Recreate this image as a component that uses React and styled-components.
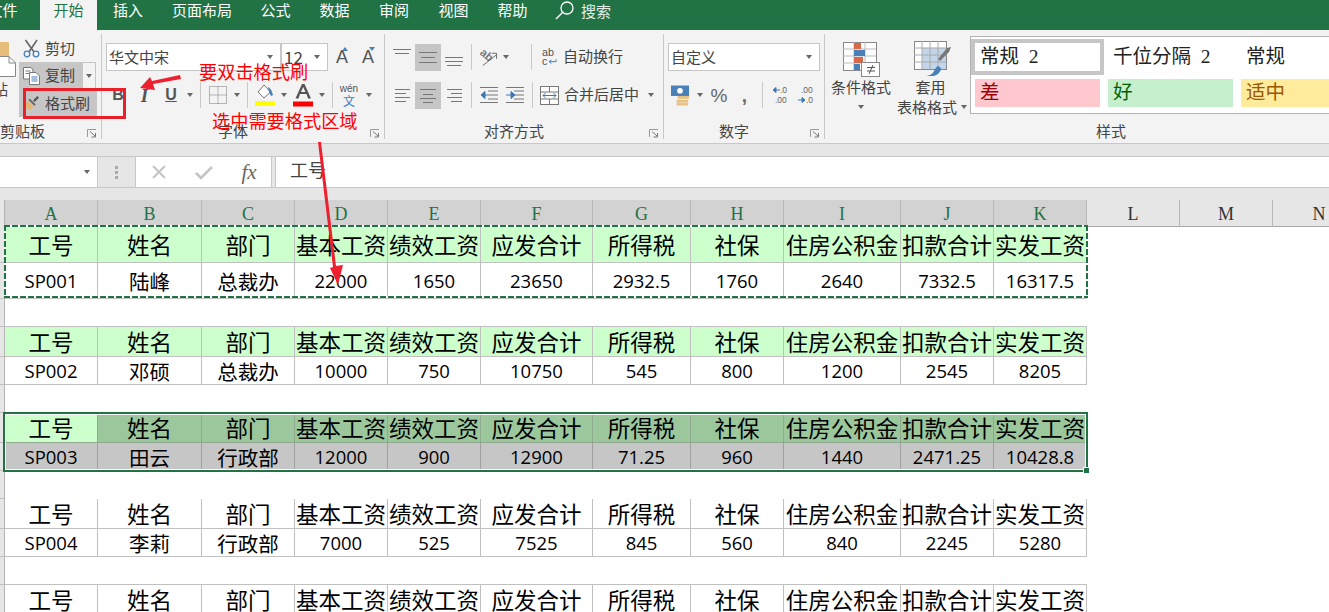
import React from "react";
import styled, { createGlobalStyle } from "styled-components";

const UI = `"Noto Sans CJK SC", "Noto Sans", sans-serif`;
const SERIF = `"Liberation Serif", "Noto Sans CJK SC", serif`;
const GREEN = "#217346";

const Global = createGlobalStyle`
  html, body { margin: 0; padding: 0; background: #fff; overflow: hidden; }
  #root { width: 1329px; height: 612px; }
`;

const Page = styled.div`
  position: relative; width: 1329px; height: 612px; overflow: hidden;
  font-family: ${UI}; color: #444; background: #fff;
`;

/* ---------- tabs ---------- */
const TabBar = styled.div`
  display: flex; height: 30px; background: ${GREEN}; margin-left: -34px; width: 1363px;
`;
const Tab = styled.div`
  flex: none; width: ${p => p.$w || 59}px; display: flex; align-items: center; justify-content: center;
  box-sizing: border-box; padding-bottom: 10px;
  font-size: 15px; line-height: 20px; color: ${p => (p.$active ? GREEN : "#fff")};
  background: ${p => (p.$active ? "#f3f3f3" : "transparent")};
  margin: ${p => (p.$active ? "0 1px" : "0")};
`;
const SearchBox = styled.div`
  display: flex; align-items: flex-start; gap: 7px; margin-left: 13px; color: #e4efe8; font-size: 15px; line-height: 20px;
  padding-top: 1px;
`;

/* ---------- ribbon ---------- */
const Ribbon = styled.div`
  display: flex; height: 109px; background: #f3f3f3; border-bottom: 1px solid #c8c8c8;
  padding-top: 4px; box-sizing: content-box; overflow: hidden;
`;
const Group = styled.div`
  flex: none; width: ${p => p.$w}px; height: 105px; box-sizing: border-box; display: flex; flex-direction: column;
  margin-left: ${p => p.$ml || 0}px; border-right: 1px solid #c8c8c8;
  ${p => p.$noBorder && "border-right: none;"}
`;
const Body = styled.div`
  flex: 1; display: flex; flex-direction: column; gap: 10px; padding-top: 9px;
`;
const Row = styled.div`
  display: flex; align-items: center; height: 28px; flex: none;
`;
const GroupFoot = styled.div`
  flex: none; height: 16px; display: grid; grid-template-columns: 1fr auto 1fr 20px;
  align-items: center; font-size: 15px; line-height: 16px; color: #444;
`;
const FootText = styled.span`grid-column: 2;`;
const Launcher = styled.svg`
  grid-column: 4; justify-self: end; margin-right: 4px; width: 10px; height: 9px; margin-top: 5px;
`;
const Slot = styled.div`
  flex: none; width: ${p => p.$w}px; margin-left: ${p => p.$ml || 0}px;
  display: flex; align-items: center; justify-content: center; height: ${p => p.$h || 28}px;
  ${p => p.$active && "background:#c6c6c6; height:27px;"}
  position: relative;
`;
const Caret = styled.div`
  flex: none; margin-left: ${p => p.$ml || 0}px; width: 0; height: 0;
  border-left: 3.5px solid transparent; border-right: 3.5px solid transparent;
  border-top: 4px solid #666;
`;
const VLine = styled.div`
  flex: none; width: 1px; height: 26px; margin-left: ${p => p.$ml || 0}px; background: #c8c8c8;
`;
const ComboBox = styled.div`
  flex: none; box-sizing: border-box; width: ${p => p.$w}px; height: 28px; margin-left: ${p => p.$ml || 0}px;
  background: #fff; border: 1px solid #c6c6c6; display: flex; align-items: center; justify-content: space-between;
  padding: 0 7px 0 2px; font-size: ${p => p.$fs || 15}px; color: #444;
  span { margin-top: -2px; }
`;
const FaceLetter = styled.span`
  font-family: "Liberation Sans", sans-serif; font-size: ${p => p.$size || 16}px; font-weight: ${p => p.$weight || 700};
  font-style: ${p => (p.$italic ? "italic" : "normal")}; color: #555; line-height: 1;
  text-decoration: ${p => (p.$under ? "underline" : "none")};
  ${p => p.$serif && `font-family:"Liberation Serif",serif;`}
`;
const SizeArrow = styled.span`
  position: absolute; top: 4px; right: 0; width: 0; height: 0;
  border-left: 3px solid transparent; border-right: 3px solid transparent;
  ${p => (p.$up ? "border-bottom: 4px solid #4a80b8;" : "border-top: 4px solid #4a80b8;")}
`;
const Wen = styled.div`
  display: flex; flex-direction: column; align-items: center; line-height: 1;
  font-family: "Liberation Sans", sans-serif; font-size: 10px; color: #555;
  span:last-child { font-family: ${UI}; font-size: 12px; color: #3f79b5; line-height: 13px; }
`;
const CmdText = styled.span`
  flex: none; margin-left: ${p => p.$ml || 0}px; margin-top: -2px; font-size: 15px; line-height: 20px; color: #444; white-space: nowrap;
`;
const NumGlyph = styled.span`
  font-family: "Liberation Sans", sans-serif; font-size: ${p => p.$size}px; color: #666; line-height: 1;
  ${p => p.$bold && "font-weight:700;"}
`;

/* clipboard */
const ClipBody = styled.div`
  flex: 1; display: flex; padding-left: 6px;
`;
const PasteCol = styled.div`
  flex: none; width: 46px; display: flex; flex-direction: column; align-items: flex-end; padding-top: 7px;
`;
const PasteText = styled.span`
  width: 46px; text-align: center; font-size: 15px; line-height: 20px; margin-top: 2px;
`;
const ClipCol = styled.div`
  margin-left: 3px; display: flex; flex-direction: column; width: 78px; padding-top: 1px;
`;
const ClipRow = styled.div`
  display: flex; align-items: center; height: ${p => p.$h || 27}px; width: ${p => p.$w || 78}px;
  padding-left: 4px; box-sizing: border-box; gap: 5px; font-size: 15px; color: #444;
  ${p => p.$on && "background:#c6c6c6;"}
  span { margin-top: -2px; }
`;
const SplitRow = styled.div`display: flex;`;
const SplitArrow = styled.div`
  flex: none; box-sizing: border-box; width: 13px; height: 27px; border: 1px solid #c6c6c6; border-left: none;
  display: flex; align-items: center; justify-content: center;
`;

/* styles group */
const StylesBody = styled.div`display: flex; flex: 1; align-items: flex-start;`;
const BigBtn = styled.div`
  flex: none; width: ${p => p.$w}px; margin-left: ${p => p.$ml || 0}px; display: flex; flex-direction: column; align-items: center;
  font-size: 15px; line-height: 20px; color: #444; padding-top: ${p => p.$top || 8}px;
`;
const BtnLine = styled.div`display: flex; align-items: center; gap: 4px; height: 20px;`;
const Gallery = styled.div`
  flex: none; width: 420px; height: 78px; box-sizing: border-box; margin: 2px 0 0 2px; background: #fff;
  border: 1px solid #b2b2b2; padding: 6px 0 0 4px; display: grid;
  grid-template-columns: repeat(3, 125px); grid-auto-rows: 28px; gap: 8px;
`;
const StyleCell = styled.div`
  font-family: ${SERIF}; font-size: 19.5px; padding: 0 0 5px 5px; box-sizing: border-box; display: flex; align-items: center; white-space: pre;
  background: ${p => p.$bg || "#fff"}; color: ${p => p.$fg || "#222"};
  ${p => p.$sel && "outline: 4px solid #c6c6c6;"}
`;

/* ---------- formula bar ---------- */
const FormulaBand = styled.div`
  background: #e6e6e6; padding: 12px 0; 
`;
const FormulaBar = styled.div`
  display: flex; height: 32px; box-sizing: border-box; background: #fff;
  border-top: 1px solid #c8c8c8; border-bottom: 1px solid #c8c8c8;
`;
const NameBox = styled.div`
  flex: none; width: 98px; box-sizing: border-box; background: #fff; border-right: 1px solid #c8c8c8;
  display: flex; align-items: center; justify-content: flex-end; padding-right: 7px;
`;
const Gutter = styled.div`
  flex: none; width: 37px; background: #e6e6e6; display: flex; align-items: center; justify-content: center; padding-right: 1px; box-sizing: border-box;
`;
const DragDots = styled.div`
  width: 3px; height: 13px;
  background: repeating-linear-gradient(to bottom, #aaa 0 3px, transparent 3px 5px);
`;
const FxBtns = styled.div`
  flex: none; width: 137px; box-sizing: border-box; border: solid #c8c8c8; border-width: 0 1px;
  display: flex; align-items: center; padding-left: 13px;
`;
const FxSlot = styled.div`
  width: 20px; margin-right: ${p => p.$mr || 0}px; display: flex; justify-content: center;
`;
const Fx = styled.span`
  font-family: "Liberation Serif", serif; font-style: italic; font-weight: 400; font-size: 21px; color: #666; line-height: 1;
`;
const Spacer = styled.div`flex: none; width: 3px; background: #e6e6e6;`;
const FormulaInput = styled.div`
  flex: 1; border-left: 1px solid #c8c8c8; padding-left: 14px; font-family: ${SERIF}; font-size: 18px; line-height: 29px; color: #444;
`;

/* ---------- sheet ---------- */
const COLS = "5px 93px 104px 93px 93px 93px 112px 98px 93px 117px 93px 93px 93px 93px 93px";
const Sheet = styled.div`display: flex; flex-direction: column;`;
const HeadRow = styled.div`
  display: grid; grid-template-columns: ${COLS}; height: 27px; background: #e6e6e6;
`;
const Corner = styled.div`border-right: 1px solid #b4b4b4; background: #e6e6e6;`;
const ColHead = styled.div`
  display: flex; align-items: center; justify-content: center; box-sizing: border-box; padding-top: 2px;
  font-family: "Liberation Serif", serif; font-size: 18px; line-height: 1;
  background: ${p => (p.$sel ? "#d2d2d2" : "#e6e6e6")}; color: ${p => (p.$sel ? GREEN : "#333")};
  border-right: 1px solid #b8b8b8; border-bottom: 1px solid ${p => (p.$sel ? GREEN : "#a8a8a8")};
`;
const GridRow = styled.div`
  display: grid; grid-template-columns: ${COLS}; height: ${p => p.$h}px; background: #fff;
`;
const Stub = styled.div`
  background: #e6e6e6; border-right: 1px solid #b4b4b4; border-bottom: 1px solid #c0c0c0;
`;
const Cell = styled.div`
  display: flex; align-items: center; justify-content: center; box-sizing: border-box; white-space: nowrap; overflow: visible;
  color: #000; background: ${p => p.$bg || "#fff"};
  padding-top: ${p => (p.$head ? 0 : 2)}px;
  border-right: 1px solid ${p => p.$line || "#c0c0c0"}; border-bottom: 1px solid ${p => p.$line || "#c0c0c0"};
  font-family: ${p => (p.$num ? `"Open Sans", sans-serif` : UI)};
  font-size: ${p => (p.$head ? 22.5 : p.$num ? 18.5 : 20.5)}px; line-height: 1;
`;
const BlankCell = styled.div`border-bottom: ${p => (p.$line ? "1px solid #c0c0c0" : "none")};`;
const Block = styled.div`position: relative;`;
const Ants = styled.div`
  position: absolute; left: 4px; top: -2px; width: 1084px; height: 73px; pointer-events: none;
  background-image:
    repeating-linear-gradient(to right, ${GREEN} 0 6px, #fff 6px 8px),
    repeating-linear-gradient(to right, ${GREEN} 0 6px, #fff 6px 8px),
    repeating-linear-gradient(to bottom, ${GREEN} 0 6px, #fff 6px 8px),
    repeating-linear-gradient(to bottom, ${GREEN} 0 6px, #fff 6px 8px);
  background-size: 100% 2px, 100% 2px, 2px 100%, 2px 100%;
  background-position: 0 0, 0 100%, 0 0, 100% 0;
  background-repeat: no-repeat;
`;
const Selection = styled.div`
  position: absolute; left: 3px; top: -1px; width: 1085px; height: 60px; box-sizing: border-box;
  border: 2px solid ${GREEN}; box-shadow: inset 0 0 0 1px #fff;
`;
const Handle = styled.div`
  position: absolute; left: 1083px; top: 54px; width: 5px; height: 5px; background: ${GREEN}; border: 1px solid #fff;
`;

/* ---------- annotations ---------- */
const Overlay = styled.svg`position: absolute; left: 0; top: 0; pointer-events: none;`;
const Note = styled.div`
  position: absolute; left: ${p => p.$x}px; top: ${p => p.$y}px; color: #f00; font-size: 18.2px; line-height: 22px; white-space: nowrap;
`;
const RedBox = styled.div`
  position: absolute; left: 23px; top: 88px; width: 103px; height: 31px; box-sizing: border-box; border: 3px solid #e8202a;
`;

/* ---------- icons ---------- */
const Lines = ({ w = 18, h = 24, rows, color = "#777" }) => (
  <svg width={w} height={h} viewBox={`0 0 ${w} ${h}`}>
    {rows.map(([x, y, l], i) => <rect key={i} x={x} y={y} width={l} height="1" fill={color} />)}
  </svg>
);
const LaunchIcon = () => (
  <Launcher viewBox="0 0 10 9">
    <path d="M0.5 8V0.5H9" fill="none" stroke="#999" />
    <path d="M3 2.5L8 7M8.5 4V8H4.5" fill="none" stroke="#777" />
  </Launcher>
);
const Foot = ({ children }) => (
  <GroupFoot>
    <FootText>{children}</FootText>
    <LaunchIcon />
  </GroupFoot>
);
const Scissors = () => (
  <svg width="17" height="19" viewBox="0 0 17 19">
    <path d="M2.5 1L11 13M14 1L6 13" stroke="#666" strokeWidth="1.6" fill="none" />
    <circle cx="4" cy="15" r="2.8" stroke="#4a80b8" strokeWidth="1.3" fill="none" />
    <circle cx="13" cy="15" r="2.8" stroke="#4a80b8" strokeWidth="1.3" fill="none" />
  </svg>
);
const CopyIcon = () => (
  <svg width="17" height="18" viewBox="0 0 17 18">
    <path d="M.5.5H8L10 3V12H.5Z" fill="#fff" stroke="#777" />
    <path d="M2.5 4h5M2.5 6.5h5" stroke="#777" />
    <path d="M6.5 5.5H13L16.5 9V17.5H6.5Z" fill="#fff" stroke="#777" />
    <path d="M8.5 10h6M8.5 12h6M8.5 14h6" stroke="#4a80b8" />
  </svg>
);
const BrushIcon = () => (
  <svg width="17" height="17" viewBox="0 0 16 16">
    <path d="M9.5 5L13.5 1 15 2.5 11 6.500Z" fill="#555" />
    <path d="M6.500 3.500L12 9 10.500 10 5 4.500Z" fill="#666" />
    <path d="M5 5.500L10 10.500 6 15 1 9.500Z" fill="#e5b777" />
  </svg>
);
const PasteIcon = () => (
  <svg width="30" height="36" viewBox="0 0 30 36">
    <rect x="0" y="1" width="23" height="15" rx="1" fill="#e7bd7b" />
    <path d="M3.5 15.5H23L29.5 22V35.5H3.5Z" fill="#fff" stroke="#888" />
    <path d="M23 15.5V22H29.5" fill="none" stroke="#888" />
  </svg>
);
const BorderIcon = () => (
  <svg width="18" height="18" viewBox="0 0 18 18">
    <rect x=".5" y=".5" width="17" height="17" fill="none" stroke="#777" strokeDasharray="1 1" />
    <path d="M9 .5V17.500M.5 9H17.500" stroke="#777" strokeDasharray="1 1" />
  </svg>
);
const FillIcon = () => (
  <svg width="20" height="22" viewBox="0 0 20 22">
    <path d="M9 1L3 8l6 6 6.5-6Z" fill="#fff" stroke="#777" />
    <path d="M13 3c2 1 3 2.500 4 5l1 3-2 1-2-4" fill="#4a80b8" />
    <rect x="0" y="17" width="20" height="5" fill="#ff0" />
  </svg>
);
const ColorIcon = () => (
  <svg width="20" height="23" viewBox="0 0 20 23">
    <path d="M9 0h2.500L18 14.500h-3L13.500 10H7l-1.500 4.500H2.500ZM8 8h4.500L10.200 3Z" fill="#555" fillRule="evenodd" />
    <rect x="0" y="17.500" width="20" height="5" fill="#f00" />
  </svg>
);
const OrientIcon = () => (
  <svg width="19" height="19" viewBox="0 0 19 19">
    <g transform="rotate(40 7 7)"><text x="0" y="11" fontFamily="Liberation Sans" fontSize="12" fontWeight="700" fill="#777">ab</text></g>
    <path d="M3 18L17 7M12.500 5h5V11" fill="none" stroke="#666" />
  </svg>
);
const Indent = ({ flip }) => (
  <svg width="18" height="16" viewBox="0 0 18 16">
    <path d="M0 .5h18M8 4h10M8 8h10M8 12h10M0 15.500h18" stroke="#777" />
    <path d={flip ? "M0 8H5M5 4.500L9 8 5 11.500Z" : "M3 8H8M5 4.500L1 8 5 11.500Z"} fill="#3f79b5" stroke="#3f79b5" />
  </svg>
);
const WrapIcon = () => (
  <svg width="16" height="18" viewBox="0 0 16 18">
    <text x="0" y="8" fontFamily="Liberation Sans" fontSize="11.500" fill="#555">ab</text>
    <text x="0" y="17.500" fontFamily="Liberation Sans" fontSize="11.500" fill="#555">c</text>
    <path d="M15 11.500V14H8M10 12l-2.500 2 2.500 2" fill="none" stroke="#3f79b5" />
  </svg>
);
const MergeIcon = () => (
  <svg width="19" height="19" viewBox="0 0 19 19">
    <rect x=".5" y=".5" width="18" height="18" fill="#fff" stroke="#777" />
    <path d="M0 6h19M0 13h19M9.500 0v6M9.500 13v6" stroke="#777" />
    <path d="M3 9.500h13M5.500 7L3 9.500 5.500 12M13.500 7L16 9.500 13.500 12" fill="none" stroke="#3f79b5" />
  </svg>
);
const Currency = () => (
  <svg width="20" height="21" viewBox="0 0 20 21">
    <rect x="0" y="0" width="19" height="11" fill="#4a80b8" />
    <circle cx="9.500" cy="5.500" r="3" fill="#fff" />
    <rect x="7" y="11" width="12" height="3" fill="#e8c07f" />
    <rect x="6" y="15" width="12" height="3" fill="#e8c07f" />
    <rect x="6" y="18.500" width="12" height="2.500" fill="#e8c07f" />
  </svg>
);
const Decimal = ({ more }) => (
  <svg width="16" height="18" viewBox="0 0 16 18">
    <text x={more ? 3 : 8} y="7" fontFamily="Liberation Sans" fontSize="8.500" fill="#666">{more ? ".00" : ".0"}</text>
    <text x={more ? 8 : 3} y="17" fontFamily="Liberation Sans" fontSize="8.500" fill="#666">{more ? ".0" : ".00"}</text>
    {more
      ? <path d="M0 14h6M4 11.500L7 14l-3 2.500Z" fill="#3f79b5" stroke="#3f79b5" />
      : <path d="M2 4h6M4 1.500L1 4l3 2.500Z" fill="#3f79b5" stroke="#3f79b5" />}
  </svg>
);
const CondIcon = () => (
  <svg width="37" height="35" viewBox="0 0 37 35">
    <rect x=".5" y=".5" width="33" height="28" fill="#fff" stroke="#888" />
    <path d="M11 0v28M22 0v28M0 7h33M0 14h33M0 21h33" stroke="#bbb" />
    <rect x="11" y="1" width="7" height="6" fill="#d9684a" />
    <rect x="11" y="8" width="11" height="6" fill="#4a80b8" />
    <rect x="11" y="15" width="9" height="6" fill="#d9684a" />
    <rect x="11" y="22" width="6" height="6" fill="#4a80b8" />
    <rect x="18.500" y="20.500" width="18" height="14" fill="#fff" stroke="#888" />
    <path d="M24 25.500h8M24 29h8M30 23l-4 9" stroke="#555" fill="none" />
  </svg>
);
const TableIcon = () => (
  <svg width="37" height="36" viewBox="0 0 37 36">
    <rect x=".5" y=".5" width="32" height="28" fill="#fff" stroke="#888" />
    <rect x="8" y="7" width="24" height="21" fill="#c3d5e9" />
    <path d="M8 0v28M16 0v28M24 0v28M0 7h32M0 14h32M0 21h32" stroke="#aaa" />
    <path d="M24 18l9-11 4-1-2 5-9 9Z" fill="#777" />
    <path d="M10 35c5 0 9-2 10-5 1-2 3-5 4-5l3 2c0 4-4 8-8 8Z" fill="#4a80b8" />
  </svg>
);
const SearchIcon = () => (
  <svg width="19" height="19" viewBox="0 0 19 19">
    <circle cx="12" cy="7" r="6" fill="none" stroke="#fff" strokeWidth="1.300" />
    <path d="M7.500 11.500L1 18" stroke="#fff" strokeWidth="1.500" />
  </svg>
);

/* ---------- data ---------- */
const LETTERS = "ABCDEFGHIJKLMN".split("");
const HEADS = ["工号", "姓名", "部门", "基本工资", "绩效工资", "应发合计", "所得税", "社保", "住房公积金", "扣款合计", "实发工资"];
const DATA = {
  1: ["SP001", "陆峰", "总裁办", "22000", "1650", "23650", "2932.5", "1760", "2640", "7332.5", "16317.5"],
  2: ["SP002", "邓硕", "总裁办", "10000", "750", "10750", "545", "800", "1200", "2545", "8205"],
  3: ["SP003", "田云", "行政部", "12000", "900", "12900", "71.25", "960", "1440", "2471.25", "10428.8"],
  4: ["SP004", "李莉", "行政部", "7000", "525", "7525", "845", "560", "840", "2245", "5280"],
};
const isNum = (v) => /^[A-Z0-9.]+$/.test(v);

const HeaderRow = ({ h, tint, selected }) => (
  <GridRow $h={h}>
    <Stub />
    {HEADS.map((t, i) => (
      <Cell key={t} $head $bg={selected ? (i === 0 ? "#ccffcc" : "#9cc79c") : tint ? "#ccffcc" : "#fff"} $line={selected ? "#8fa98f" : undefined}>{t}</Cell>
    ))}
  </GridRow>
);
const DataRow = ({ h, values, selected }) => (
  <GridRow $h={h}>
    <Stub />
    {values.map((t, i) => (
      <Cell key={i} $num={isNum(t)} $bg={selected ? "#c6c6c6" : "#fff"} $line={selected ? "#a0a0a0" : undefined}>{t}</Cell>
    ))}
  </GridRow>
);
const BlankRow = ({ h, line = true }) => (
  <GridRow $h={h}>
    <Stub />
    {HEADS.map((t) => <BlankCell key={t} $line={line} />)}
  </GridRow>
);

export default function App() {
  return (
    <Page>
      <Global />
      <TabBar>
        <Tab $w={73}>文件</Tab>
        <Tab $active $w={57}>开始</Tab>
        <Tab $w={60}>插入</Tab>
        <Tab $w={88}>页面布局</Tab>
        <Tab>公式</Tab>
        <Tab>数据</Tab>
        <Tab $w={60}>审阅</Tab>
        <Tab>视图</Tab>
        <Tab>帮助</Tab>
        <SearchBox><SearchIcon /><span>搜索</span></SearchBox>
      </TabBar>

      <Ribbon>
        <Group $w={138} $ml={-36}>
          <ClipBody>
            <PasteCol>
              <PasteIcon />
              <PasteText>粘贴</PasteText>
            </PasteCol>
            <ClipCol>
              <ClipRow><Scissors /><span>剪切</span></ClipRow>
              <SplitRow>
                <ClipRow $on $w={64}><CopyIcon /><span>复制</span></ClipRow>
                <SplitArrow><Caret /></SplitArrow>
              </SplitRow>
              <ClipRow $on $h={28}><BrushIcon /><span>格式刷</span></ClipRow>
            </ClipCol>
          </ClipBody>
          <Foot>剪贴板</Foot>
        </Group>

        <Group $w={283}>
          <Body>
            <Row>
              <ComboBox $w={175} $ml={4}><span>华文中宋</span><Caret /></ComboBox>
              <ComboBox $w={47} $fs={17}><span>12</span><Caret /></ComboBox>
              <Slot $w={12} $ml={8}><FaceLetter $size={18} $weight={400}>A</FaceLetter><SizeArrow $up /></Slot>
              <Slot $w={14} $ml={13}><FaceLetter $size={18} $weight={400}>A</FaceLetter><SizeArrow /></Slot>
            </Row>
            <Row>
              <Slot $w={10} $ml={11}><FaceLetter>B</FaceLetter></Slot>
              <Slot $w={7} $ml={18}><FaceLetter $italic $serif $size={19}>I</FaceLetter></Slot>
              <Slot $w={10} $ml={18}><FaceLetter $under>U</FaceLetter></Slot>
              <Caret $ml={11} />
              <VLine $ml={7} />
              <Slot $w={18} $ml={8}><BorderIcon /></Slot>
              <Caret $ml={7} />
              <VLine $ml={7} />
              <Slot $w={20} $ml={7}><FillIcon /></Slot>
              <Caret $ml={6} />
              <Slot $w={20} $ml={6}><ColorIcon /></Slot>
              <Caret $ml={6} />
              <VLine $ml={7} />
              <Slot $w={16} $ml={8}><Wen><span>wén</span><span>文</span></Wen></Slot>
              <Caret $ml={9} />
            </Row>
          </Body>
          <Foot>字体</Foot>
        </Group>

        <Group $w={279}>
          <Body>
            <Row>
              <Slot $w={18} $ml={8}><Lines rows={[[0, 4, 18], [2, 8, 14]]} /></Slot>
              <Slot $w={26} $ml={4} $active><Lines rows={[[0, 7, 18], [2, 12, 14], [0, 17, 18]]} /></Slot>
              <Slot $w={18} $ml={4}><Lines rows={[[0, 12, 18], [0, 16, 18], [2, 20, 14]]} /></Slot>
              <VLine $ml={8} />
              <Slot $w={18} $ml={8}><OrientIcon /></Slot>
              <Caret $ml={5} />
              <VLine $ml={22} />
              <Slot $w={15} $ml={10}><WrapIcon /></Slot>
              <CmdText $ml={6}>自动换行</CmdText>
            </Row>
            <Row>
              <Slot $w={15} $ml={10}><Lines w={15} rows={[[0, 6, 15], [0, 10, 11], [0, 14, 15], [0, 18, 11]]} /></Slot>
              <Slot $w={26} $ml={5} $active><Lines w={16} rows={[[0, 6, 16], [3, 11, 10], [0, 15, 16], [3, 19, 10]]} /></Slot>
              <Slot $w={15} $ml={6}><Lines w={15} rows={[[0, 6, 15], [4, 10, 11], [0, 14, 15], [4, 18, 11]]} /></Slot>
              <VLine $ml={9} />
              <Slot $w={18} $ml={8}><Indent /></Slot>
              <Slot $w={18} $ml={8}><Indent flip /></Slot>
              <VLine $ml={8} />
              <Slot $w={19} $ml={7}><MergeIcon /></Slot>
              <CmdText $ml={5}>合并后居中</CmdText>
              <Caret $ml={9} />
            </Row>
          </Body>
          <Foot>对齐方式</Foot>
        </Group>

        <Group $w={161}>
          <Body>
            <Row><ComboBox $w={152} $ml={4}><span>自定义</span><Caret /></ComboBox></Row>
            <Row>
              <Slot $w={19} $ml={7}><Currency /></Slot>
              <Caret $ml={7} />
              <Slot $w={16} $ml={8}><NumGlyph $size={19}>%</NumGlyph></Slot>
              <Slot $w={5} $ml={15}><NumGlyph $size={19} $bold>,</NumGlyph></Slot>
              <VLine $ml={15} />
              <Slot $w={16} $ml={9}><Decimal /></Slot>
              <Slot $w={16} $ml={10}><Decimal more /></Slot>
            </Row>
          </Body>
          <Foot>数字</Foot>
        </Group>

        <Group $w={592} $noBorder>
          <StylesBody>
            <BigBtn $w={60} $ml={6} $top={8}>
              <CondIcon />
              <BtnLine>条件格式</BtnLine>
              <BtnLine><Caret /></BtnLine>
            </BigBtn>
            <BigBtn $w={72} $ml={5} $top={7}>
              <TableIcon />
              <BtnLine style={{ marginRight: 3 }}>套用</BtnLine>
              <BtnLine>表格格式<Caret /></BtnLine>
            </BigBtn>
            <Gallery>
              <StyleCell $sel>常规  2</StyleCell>
              <StyleCell>千位分隔  2</StyleCell>
              <StyleCell>常规</StyleCell>
              <StyleCell $bg="#ffc7ce" $fg="#9c0006">差</StyleCell>
              <StyleCell $bg="#c6efce" $fg="#006100">好</StyleCell>
              <StyleCell $bg="#ffeb9c" $fg="#9c5700">适中</StyleCell>
            </Gallery>
          </StylesBody>
          <GroupFoot><FootText>样式</FootText></GroupFoot>
        </Group>
      </Ribbon>

      <FormulaBand>
        <FormulaBar>
          <NameBox><Caret /></NameBox>
          <Gutter><DragDots /></Gutter>
          <FxBtns>
            <FxSlot $mr={25}>
              <svg width="16" height="16" viewBox="0 0 16 16"><path d="M2 2l12 12M14 2L2 14" stroke="#c4c4c4" strokeWidth="2" /></svg>
            </FxSlot>
            <FxSlot $mr={25}>
              <svg width="18" height="15" viewBox="0 0 18 15"><path d="M1 8l5 5L17 2" fill="none" stroke="#c4c4c4" strokeWidth="2.500" /></svg>
            </FxSlot>
            <FxSlot><Fx>fx</Fx></FxSlot>
          </FxBtns>
          <Spacer />
          <FormulaInput>工号</FormulaInput>
        </FormulaBar>
      </FormulaBand>

      <Sheet>
        <HeadRow>
          <Corner />
          {LETTERS.map((l, i) => <ColHead key={l} $sel={i < 11}>{l}</ColHead>)}
        </HeadRow>
        <Block>
          <HeaderRow h={36} tint />
          <DataRow h={36} values={DATA[1]} />
          <Ants />
        </Block>
        <BlankRow h={28} />
        <HeaderRow h={30} tint />
        <DataRow h={28} values={DATA[2]} />
        <BlankRow h={28} />
        <Block>
          <HeaderRow h={30} selected />
          <DataRow h={28} values={DATA[3]} selected />
          <Selection />
          <Handle />
        </Block>
        <BlankRow h={28} line={false} />
        <HeaderRow h={30} />
        <DataRow h={28} values={DATA[4]} />
        <BlankRow h={28} />
        <HeaderRow h={30} />
      </Sheet>

      <RedBox />
      <Overlay width="1329" height="612" viewBox="0 0 1329 612">
        <path d="M180 75L181 79L153 84L155 90L140 88L150 77L152 81Z" fill="#ee2030" />
        <path d="M318 142L321 142L336 266L343 265L338 285L330 268L333 267Z" fill="#ee2030" />
      </Overlay>
      <Note $x={199} $y={60}>要双击格式刷</Note>
      <Note $x={212} $y={109}>选中需要格式区域</Note>
    </Page>
  );
}
